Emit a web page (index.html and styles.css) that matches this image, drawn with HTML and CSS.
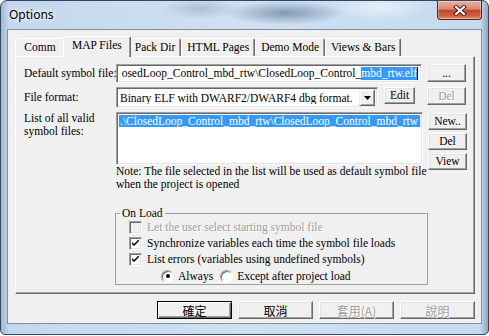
FILE: index.html
```html
<!DOCTYPE html>
<html lang="en">
<head>
  <meta charset="UTF-8" />
  <title>Options</title>
  <link rel="stylesheet" href="styles.css">
</head>
<body>
  <div class="window">
    <div class="titlebar">
      <span class="title">Options</span>
      <button class="close" aria-label="Close">
        <svg width="14" height="11" viewBox="0 0 14 11">
          <path d="M3 2 L11 9 M11 2 L3 9" stroke="#4a2219" stroke-width="4" stroke-linecap="square"/>
          <path d="M3 2 L11 9 M11 2 L3 9" stroke="#fff" stroke-width="2" stroke-linecap="square"/>
        </svg>
      </button>
    </div>

    <div class="client">
      <div class="tabs">
        <div class="tab tab-first">Comm</div>
        <div class="tab active">MAP Files</div>
        <div class="tab">Pack Dir</div>
        <div class="tab">HTML Pages</div>
        <div class="tab">Demo Mode</div>
        <div class="tab">Views &amp; Bars</div>
      </div>

      <div class="panel">
        <div class="field-row">
          <div class="label">Default symbol file:</div>
          <div class="textbox">
            <span>osedLoop_Control_mbd_rtw\ClosedLoop_Control_</span><span class="sel">mbd_rtw.elf</span><span class="caret"></span>
          </div>
          <button class="btn side">...</button>
        </div>

        <div class="field-row row-format">
          <div class="label">File format:</div>
          <div class="field">
            <div class="combo">
              <span class="combo-text">Binary ELF with DWARF2/DWARF4 dbg format.</span>
              <span class="combo-arrow">
                <svg width="7" height="4" viewBox="0 0 7 4"><path d="M0 0 H7 L3.5 4 Z" fill="#000"/></svg>
              </span>
            </div>
            <button class="btn edit">Edit</button>
          </div>
          <button class="btn side disabled">Del</button>
        </div>

        <div class="field-row row-list">
          <div class="label">List of all valid<br>symbol files:</div>
          <div class="list-col">
            <div class="listbox">
              <div class="list-item selected">.\ClosedLoop_Control_mbd_rtw\ClosedLoop_Control_mbd_rtw</div>
            </div>
            <p class="note">Note: The file selected in the list will be used as default symbol file<br>when the project is opened</p>
          </div>
          <div class="side-buttons">
            <button class="btn side">New..</button>
            <button class="btn side">Del</button>
            <button class="btn side">View</button>
          </div>
        </div>

        <fieldset class="group">
          <legend>On Load</legend>
          <div class="option disabled"><span class="check"></span>Let the user select starting symbol file</div>
          <div class="option"><span class="check"><svg width="7" height="7" viewBox="0 0 7 7"><path d="M0 2 L0 4 L2 6 L7 1 L7 -1 L2 4 Z" fill="#000"/></svg></span>Synchronize variables each time the symbol file loads</div>
          <div class="option"><span class="check"><svg width="7" height="7" viewBox="0 0 7 7"><path d="M0 2 L0 4 L2 6 L7 1 L7 -1 L2 4 Z" fill="#000"/></svg></span>List errors (variables using undefined symbols)</div>
          <div class="option radios">
            <span class="radio on"></span><span class="radio-label">Always</span>
            <span class="radio"></span><span>Except after project load</span>
          </div>
        </fieldset>
      </div>

      <div class="actions">
        <button class="btn cjk default">確定</button>
        <button class="btn cjk">取消</button>
        <button class="btn cjk disabled">套用(A)</button>
        <button class="btn cjk disabled">說明</button>
      </div>
    </div>
  </div>
</body>
</html>
```

FILE: styles.css
```css
* {
  box-sizing: border-box;
}

body {
  margin: 0;
  width: 489px;
  height: 336px;
  overflow: hidden;
  background: #fff;
  font-family: "Liberation Serif", "Times New Roman", "DejaVu Serif", serif;
  font-size: 11.5px;
  color: #000;
}

button,
legend {
  font-family: "Liberation Serif", "Times New Roman", serif;
  font-size: 11.5px;
  color: #000;
  padding: 0;
  margin: 0;
}

/* window frame */

.window {
  width: 489px;
  height: 335px;
  border: 1px solid #33465c;
  border-radius: 7px 7px 5px 5px;
  padding: 0 6px 10px;
  display: flex;
  flex-direction: column;
  background:
    radial-gradient(ellipse 60px 12px at 285px 12px, rgba(70, 95, 130, 0.55), transparent),
    radial-gradient(ellipse 40px 10px at 200px 8px, rgba(110, 135, 165, 0.35), transparent),
    radial-gradient(ellipse 50px 14px at 380px 6px, rgba(235, 244, 252, 0.8), transparent),
    linear-gradient(to right, #9fb8d3 0, #c4d7ec 8px, #cfe0f2 50%, #c6daee calc(100% - 8px), #8ea6c1 100%);
}

.titlebar {
  height: 28px;
  display: flex;
  align-items: flex-start;
  flex: none;
}

.title {
  font-family: "Noto Sans", sans-serif;
  font-size: 12px;
  line-height: 16px;
  margin: 6px 0 0 2px;
  color: #000;
  text-shadow: 0 0 8px #fff, 0 0 4px #fff;
}

.close {
  margin-left: auto;
  width: 45px;
  height: 19px;
  border: 1px solid #5c2318;
  border-top: none;
  border-radius: 0 0 4px 4px;
  background: linear-gradient(#e9aa9c, #d98b77 45%, #c2472f 50%, #cc5a3c 80%, #e08d6c);
  box-shadow: inset 0 0 0 1px rgba(255, 255, 255, 0.35);
  display: flex;
  align-items: center;
  justify-content: center;
}

.client {
  width: 475px;
  height: 295px;
  border: 1px solid #7d90a6;
  background: #f0f0f0;
}

/* tabs */

.tabs {
  display: flex;
  align-items: flex-end;
  height: 26px;
  padding-left: 7px;
}

.tab {
  height: 18px;
  padding: 0 5px;
  line-height: 16px;
  border: 1px solid;
  border-bottom: none;
  border-color: #fff #696969 transparent #fff;
  border-radius: 2px 2px 0 0;
  box-shadow: inset -1px 0 0 #a0a0a0;
  white-space: nowrap;
  text-align: center;
}

.tab-first {
  min-width: 50px;
}

.tab.active {
  position: relative;
  z-index: 1;
  height: 21px;
  margin: 0 -2px -1px;
  padding: 0 8px 4px;
  background: #f0f0f0;
}

.panel {
  margin-left: 7px;
  width: 460px;
  height: 238px;
  border: 1px solid;
  border-color: #fff #696969 #696969 #fff;
  box-shadow: inset -1px -1px 0 #a0a0a0;
  padding: 7px 8px 0;
}

/* rows */

.field-row {
  display: flex;
  align-items: flex-start;
}

.label {
  width: 92px;
  flex: none;
  line-height: 18px;
  white-space: nowrap;
}

.row-format {
  margin-top: 4px;
}

.row-format .label {
  line-height: 20px;
}

.row-list {
  margin-top: 4px;
}

.row-list .label {
  line-height: 13px;
}

.textbox,
.combo,
.listbox {
  background: #fff;
  border: 1px solid;
  border-color: #a0a0a0 #fff #fff #a0a0a0;
  box-shadow: inset 1px 1px 0 #696969, inset -1px -1px 0 #e3e3e3;
}

.textbox {
  width: 307px;
  height: 19px;
  display: flex;
  justify-content: flex-end;
  align-items: center;
  overflow: hidden;
  white-space: nowrap;
  padding: 0 3px 0 2px;
  line-height: 13px;
}

.sel {
  background: #3399ff;
  color: #fff;
}

.caret {
  width: 1px;
  height: 13px;
  background: #000;
  flex: none;
}

.field {
  width: 307px;
  display: flex;
  align-items: flex-start;
}

.combo {
  width: 262px;
  height: 21px;
  display: flex;
  align-items: center;
  padding: 2px;
}

.combo-text {
  flex: 1;
  padding-left: 1px;
  white-space: nowrap;
  overflow: hidden;
}

.combo-arrow {
  width: 16px;
  height: 17px;
  flex: none;
  background: #f0f0f0;
  border: 1px solid;
  border-color: #f0f0f0 #696969 #696969 #f0f0f0;
  box-shadow: inset 1px 1px 0 #fff, inset -1px -1px 0 #a0a0a0;
  display: flex;
  align-items: center;
  justify-content: center;
}

.list-col {
  width: 307px;
  flex: none;
}

.listbox {
  width: 307px;
  height: 53px;
  padding: 2px;
  overflow: hidden;
}

.list-item {
  line-height: 12px;
  white-space: nowrap;
  padding-left: 1px;
}

.list-item.selected {
  background: #3399ff;
  color: #fff;
}

.note {
  margin: 0;
  line-height: 13px;
  white-space: nowrap;
}

.side-buttons {
  display: flex;
  flex-direction: column;
  gap: 3px;
  margin-left: 5px;
  margin-top: 1px;
}

/* buttons */

.btn {
  background: #f0f0f0;
  border: 1px solid;
  border-color: #fff #696969 #696969 #fff;
  box-shadow: inset -1px -1px 0 #a0a0a0, inset 1px 1px 0 #e3e3e3;
  height: 18px;
  line-height: 15px;
  text-align: center;
}

.btn.side {
  width: 39px;
  margin-left: 5px;
  flex: none;
}

.side-buttons .btn.side {
  margin-left: 0;
  height: 17px;
}

.btn.edit {
  width: 31px;
  height: 17px;
  margin-left: 6px;
}

.btn.disabled {
  color: #a0a0a0;
  text-shadow: 1px 1px 0 #fff;
}

/* on load group */

.group {
  margin: 15px 0 0 91px;
  width: 313px;
  height: 79px;
  border: 1px solid #a0a0a0;
  padding: 0 0 0 13px;
}

.group legend {
  padding: 0 2px;
  margin-left: -9px;
  line-height: 14px;
}

.option {
  display: flex;
  align-items: center;
  height: 16px;
  gap: 5px;
  white-space: nowrap;
}

.option:first-of-type {
  margin-top: -1px;
}

.option.disabled {
  color: #a0a0a0;
  text-shadow: 1px 1px 0 #fff;
}

.check {
  width: 13px;
  height: 13px;
  flex: none;
  background: #fff;
  border: 1px solid;
  border-color: #a0a0a0 #fff #fff #a0a0a0;
  box-shadow: inset 1px 1px 0 #696969, inset -1px -1px 0 #e3e3e3;
  display: flex;
  align-items: center;
  justify-content: center;
}

.option.disabled .check {
  background: #f0f0f0;
}

.radios {
  padding-left: 32px;
  gap: 4px;
  margin-top: 1px;
}

.radio {
  width: 13px;
  height: 13px;
  flex: none;
  border-radius: 50%;
  background: #fff;
  border: 1px solid;
  border-color: #a0a0a0 #fff #fff #a0a0a0;
  box-shadow: inset 1px 1px 0 #696969, 0 0 0 0.5px #e8e8e8;
  display: flex;
  align-items: center;
  justify-content: center;
}

.radio.on::after {
  content: "";
  width: 4px;
  height: 4px;
  border-radius: 50%;
  background: #000;
}

.radio-label {
  margin-right: 3px;
}

/* dialog buttons */

.actions {
  display: flex;
  justify-content: flex-end;
  gap: 6px;
  padding: 7px 6px 0 0;
}

.btn.cjk {
  width: 75px;
  font-family: "Noto Sans CJK TC", sans-serif;
  font-size: 12px;
  line-height: 15px;
}

.btn.default {
  border-color: #000;
  box-shadow: inset 1px 1px 0 #fff, inset -1px -1px 0 #696969, inset -2px -2px 0 #a0a0a0;
}
```
